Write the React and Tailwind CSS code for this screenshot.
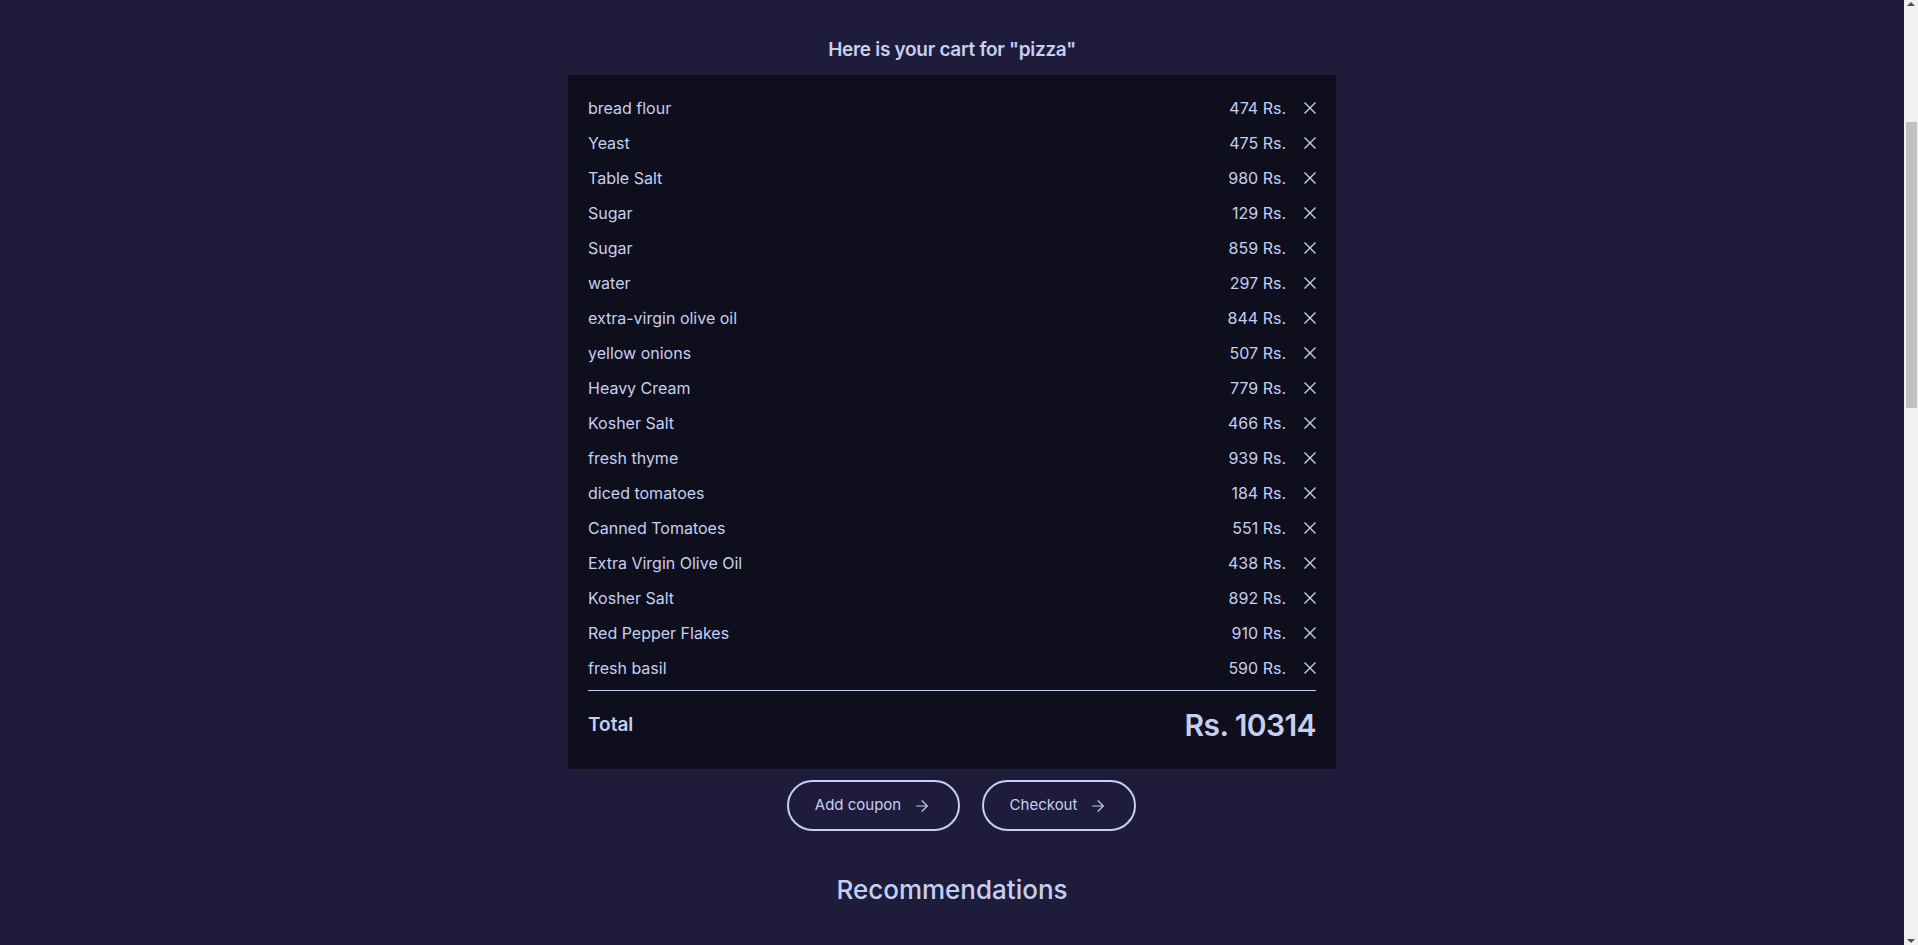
import React from 'react';
import { ArrowRight } from 'lucide-react';

const items = [
  ['bread flour', 474],
  ['Yeast', 475],
  ['Table Salt', 980],
  ['Sugar', 129],
  ['Sugar', 859],
  ['water', 297],
  ['extra-virgin olive oil', 844],
  ['yellow onions', 507],
  ['Heavy Cream', 779],
  ['Kosher Salt', 466],
  ['fresh thyme', 939],
  ['diced tomatoes', 184],
  ['Canned Tomatoes', 551],
  ['Extra Virgin Olive Oil', 438],
  ['Kosher Salt', 892],
  ['Red Pepper Flakes', 910],
  ['fresh basil', 590],
];

function CloseIcon() {
  return (
    <svg width="12" height="12" viewBox="0 0 12 12" fill="none" stroke="currentColor" strokeWidth="1.4">
      <path d="M0.5 0.5l11 11M11.5 0.5l-11 11" />
    </svg>
  );
}

// page is scrolled in the shot, so the scrollbar is drawn by hand
function Scrollbar() {
  return (
    <div className="flex w-[14px] flex-col bg-[#f1f1f1]">
      <div className="flex h-[14px] items-start justify-center pt-[2px]">
        <svg width="8" height="4" viewBox="0 0 8 4"><path d="M0 4L4 0L8 4Z" fill="#505050" /></svg>
      </div>
      <div className="mt-[108px] ml-[2px] h-[286px] w-[11px] bg-[#c1c1c1]" />
      <div className="flex-1" />
      <div className="flex h-[14px] items-end justify-center pb-[2px]">
        <svg width="8" height="4" viewBox="0 0 8 4"><path d="M0 0L8 0L4 4Z" fill="#505050" /></svg>
      </div>
    </div>
  );
}

function App() {
  const total = items.reduce((s, [, p]) => s + p, 0);

  return (
    <div className="flex h-[945px] overflow-hidden bg-[#1f1c3b] text-[#c5cff1] font-['Inter','Liberation_Sans',sans-serif]">
      <main className="flex flex-1 flex-col items-center pt-[36px]">
        <h1 className="text-[19px] leading-7 font-semibold tracking-[-0.3px]">Here is your cart for "pizza"</h1>

        <div className="mt-[11px] w-[768px] bg-[#0f0e1d] px-5 pt-[15px] pb-[24px]">
          <ul>
            {items.map(([name, price], i) => (
              <li key={i} className="flex h-[35px] items-center justify-between text-base">
                <span>{name}</span>
                <div className="flex items-center gap-[18px]">
                  <span>{price} Rs.</span>
                  <button className="text-[#c5cff1]">
                    <CloseIcon />
                  </button>
                </div>
              </li>
            ))}
          </ul>
          <div className="mt-[5px] h-px bg-[#c5cff1]" />
          <div className="mt-[14px] flex h-10 items-center justify-between">
            <span className="text-[19px] font-semibold">Total</span>
            <span className="text-[30px] font-semibold tracking-[-0.6px]">Rs. {total}</span>
          </div>
        </div>

        <div className="mt-[11px] ml-[18px] flex gap-[22px]">
          <button className="flex h-[51px] w-[173px] items-center justify-center gap-3 rounded-full border-2 border-[#c5cff1] text-[15px]">
            Add coupon
            <ArrowRight size={18} strokeWidth={1.5} />
          </button>
          <button className="flex h-[51px] w-[154px] items-center justify-center gap-3 rounded-full border-2 border-[#c5cff1] text-[15px]">
            Checkout
            <ArrowRight size={18} strokeWidth={1.5} />
          </button>
        </div>

        <h2 className="mt-[41px] text-[26px] leading-9 font-medium">Recommendations</h2>
      </main>
      <Scrollbar />
    </div>
  );
}

export default App;
